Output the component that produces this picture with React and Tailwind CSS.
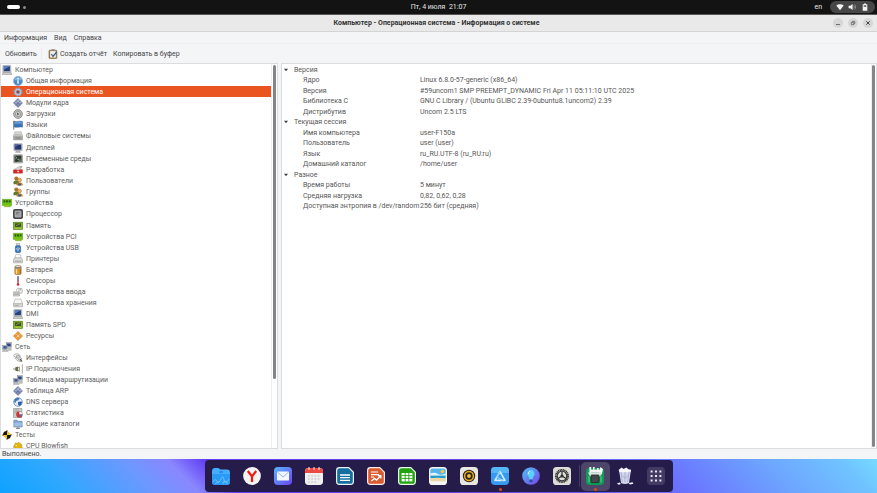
import React from "react";

const ICONS = {
  computer: (
    <>
      <path d="M1 9h10l1 2.6H.2z" fill="#c9cac6" stroke="#777" strokeWidth=".4" />
      <rect x="1" y=".6" width="9.6" height="8" rx=".6" fill="#c8cbd0" stroke="#74777c" strokeWidth=".5" />
      <rect x="2.1" y="1.6" width="7.4" height="5.8" fill="#24407c" />
      <path d="M2.1 1.6h7.4L2.1 5.6z" fill="#5a7fc0" />
    </>
  ),
  info: (
    <>
      <circle cx="6" cy="6" r="5.6" fill="#4a8bcb" stroke="#9fb9d3" strokeWidth=".7" />
      <path d="M1.4 5a4.7 4.7 0 0 1 9.2 0z" fill="#82b4e2" />
      <circle cx="6" cy="3.3" r="1" fill="#fff" />
      <path d="M5.2 5h1.6v4.4H5.2z" fill="#fff" />
    </>
  ),
  gear: (
    <>
      <circle cx="6" cy="6" r="4.7" fill="none" stroke="#7d9cc6" strokeWidth="1.8" strokeDasharray="1.9 1.79" />
      <circle cx="6" cy="6" r="3.2" fill="none" stroke="#a9c3e6" strokeWidth="2" />
      <circle cx="6" cy="6" r="1.6" fill="#5d5876" />
    </>
  ),
  module: (
    <>
      <path d="M6 .6 11.4 6 6 11.4.6 6z" fill="#7f8bb5" stroke="#525d86" strokeWidth=".6" />
      <path d="M6 1.2 10.8 6H1.2z" fill="#a5afd0" />
      <path d="M3.4 3.3 8.7 8.6M6 1 1 6M8.6 3.4 3.4 8.6" stroke="#5c678f" strokeWidth=".6" />
    </>
  ),
  boot: (
    <>
      <circle cx="6" cy="6" r="5.3" fill="#bdbdbb" stroke="#6e6e6c" strokeWidth=".8" />
      <circle cx="6" cy="6" r="3" fill="#e6e6e4" stroke="#777" strokeWidth=".8" />
      <path d="M4.9 4.2 8 6 4.9 7.8z" fill="#555" />
    </>
  ),
  flag: (
    <>
      <path d="M.9 1v10.6" stroke="#565d66" strokeWidth="1" />
      <path d="M1.4 1.4c3 1.6 6-.9 10 .3v6.9c-4-1.2-7 1.2-10-.3z" fill="#3b74b7" stroke="#234f87" strokeWidth=".5" />
      <path d="M1.8 2.4c3 1.2 6-.8 9-.2v2c-3-.6-6 1-9 .2z" fill="#6d9fd7" />
    </>
  ),
  disk: (
    <>
      <path d="M2.2 1h7.6l1.7 5.2H.5z" fill="#dcdcda" stroke="#8d8d8b" strokeWidth=".5" />
      <rect x=".5" y="6.2" width="11" height="4.5" rx=".6" fill="#b4b4b2" stroke="#777" strokeWidth=".5" />
      <path d="M2 8.4h8" stroke="#5f5f5d" strokeWidth=".9" />
      <path d="M2.4 4h7.2" stroke="#9c9c9a" strokeWidth=".7" />
    </>
  ),
  display: (
    <>
      <path d="M4.2 9h3.6l1.2 2.5H3z" fill="#b6b8ba" stroke="#777" strokeWidth=".3" />
      <rect x="1" y=".8" width="10" height="8.4" rx=".6" fill="#cfd1d4" stroke="#74777c" strokeWidth=".5" />
      <rect x="2" y="1.8" width="8" height="6.2" fill="#24346c" />
      <path d="M2 1.8h5L2 6z" fill="#505fa0" />
    </>
  ),
  terminal: (
    <>
      <rect x=".8" y=".8" width="10.6" height="10" rx=".6" fill="#c0c2be" stroke="#666" strokeWidth=".5" />
      <rect x="1.8" y="1.8" width="8.5" height="7.7" fill="#2d3a2e" />
      <path d="m2.8 3 1.8 1.5L2.8 6M5.2 6.4h2.6" stroke="#b9c9b4" fill="none" strokeWidth=".8" />
      <path d="M5 9.5 10.3 5v4.5z" fill="#617261" />
    </>
  ),
  knife: (
    <>
      <path d="m1.6 5.4 6-3.8 3 .4-5.4 3.4z" fill="#ddd" stroke="#888" strokeWidth=".5" />
      <path d="m8 3.9 2.6-3 .8.6-2 3z" fill="#999" />
      <path d="M.5 6.2c2-1.4 3.4.5 5.5 0s3.5-1.6 5.4-.4v4H.5z" fill="#df2323" stroke="#9f1414" strokeWidth=".4" />
      <path d="M5 7.9h2.4M6.2 6.8V9" stroke="#fff" strokeWidth=".8" />
    </>
  ),
  users: (
    <>
      <circle cx="4" cy="3.1" r="2.5" fill="#a9752d" />
      <path d="M.6 10V7.6c0-3 6.6-3 6.6 0V10z" fill="#5e7c2f" />
      <circle cx="7.9" cy="4.9" r="2.3" fill="#f2b25a" stroke="#8e5b17" strokeWidth=".5" />
      <path d="M4.2 11.5V10c0-3 7.4-3 7.4 0v1.5z" fill="#c8872d" />
      <path d="M5.8 9h4l-.6 2.5H6.4z" fill="#2f5a99" />
    </>
  ),
  pci: (
    <>
      <path d="M.3 1.5h11.4v7.4H10v1.6H3V8.9H.3z" fill="#6fc313" stroke="#4a8c09" strokeWidth=".5" />
      <path d="M1.8 2.6h2.2v2.8H1.8zM4.9 2.6h2.2v2.8H4.9zM8 2.6h2.2v2.8H8z" fill="#2c5a12" />
      <path d="M3.6 9v1.4M5.2 9v1.4M6.8 9v1.4M8.4 9v1.4" stroke="#e2cf4c" strokeWidth=".7" />
    </>
  ),
  cpu: (
    <>
      <rect x=".6" y=".6" width="10.8" height="10.8" rx="1.4" fill="#4b4c4e" stroke="#27282a" strokeWidth=".9" />
      <rect x="2.4" y="2.4" width="7.2" height="7.2" rx=".6" fill="#9d9fa1" stroke="#c9cacb" strokeWidth=".7" />
      <path d="M3.4 4h4.4M3.4 5.6h3" stroke="#5c5d60" strokeWidth=".7" />
    </>
  ),
  memory: (
    <>
      <rect x=".5" y="1.4" width="11" height="8.8" fill="#7eb52c" stroke="#48740f" strokeWidth=".7" />
      <rect x="2.4" y="2.8" width="7.2" height="4.4" fill="#445125" />
      <path d="M3.4 5.8 8.3 3.4" stroke="#9ab162" strokeWidth=".8" />
      <path d="M2 8.8h8" stroke="#e1d66c" strokeWidth=".9" strokeDasharray="1 .6" />
    </>
  ),
  usb: (
    <>
      <path d="M4 .4h4v3H4z" fill="#d6d8da" stroke="#777" strokeWidth=".5" />
      <rect x="2.8" y="3.2" width="6.4" height="8.4" rx="1.6" fill="#3674b8" stroke="#1e4c83" strokeWidth=".5" />
      <path d="M6 4.6v5.6M4.4 6v1.6L6 8.6l1.6-1.4V5.8" stroke="#e9f1fa" strokeWidth=".7" fill="none" />
    </>
  ),
  printer: (
    <>
      <path d="M3.2.8h5.6l.6 4.4H2.6z" fill="#fff" stroke="#999" strokeWidth=".6" />
      <path d="M1.9 4.6h8.2l1.4 2.6v3.4H.5V7.2z" fill="#dfdfdc" stroke="#888" strokeWidth=".6" />
      <path d="M2 8.6h8" stroke="#777" strokeWidth=".8" />
    </>
  ),
  battery: (
    <>
      <rect x="2.2" y="1" width="7.6" height="10.4" rx="1.4" fill="#e59a2c" stroke="#7d5c2d" strokeWidth=".6" />
      <path d="M2.2 4.4V2.3C2.2.3 9.8.3 9.8 2.3v2.1z" fill="#8b8980" />
      <path d="M3.4 1.8h5" stroke="#e5e3db" strokeWidth="1" />
      <path d="M4.2 5v5.6" stroke="#ffe2a0" strokeWidth="1.4" />
      <path d="M8.8 5v5.6" stroke="#8b5a1c" strokeWidth="1" />
    </>
  ),
  sensor: (
    <>
      <path d="M6 .4v5.2" stroke="#3b3f7a" strokeWidth="1.5" />
      <path d="M6 5v5.6" stroke="#c62a3c" strokeWidth="1.5" />
      <circle cx="6" cy="10.2" r="1.5" fill="#d51f33" />
    </>
  ),
  input: (
    <>
      <path d="M.8 5.8h6.4l.8 5H.4z" fill="#d6d6d3" stroke="#8c8c89" strokeWidth=".6" />
      <path d="M1.4 7.4h5.4M1.2 9h6" stroke="#888" strokeWidth=".6" />
      <rect x="7" y="1.6" width="4.2" height="6" rx="1.8" fill="#ebebe8" stroke="#8c8c89" strokeWidth=".6" />
      <path d="M9 1.6V4M7.4 2C5 .4 4 2.6 4.4 5" stroke="#777" strokeWidth=".6" fill="none" />
    </>
  ),
  storage: (
    <>
      <path d="M2.4 1.2h7.2l1.9 6H.5z" fill="#f5f5f3" stroke="#999" strokeWidth=".6" />
      <rect x=".5" y="7" width="11" height="3.6" rx=".7" fill="#dededc" stroke="#888" strokeWidth=".6" />
      <path d="M2 8.9h5" stroke="#888" strokeWidth=".7" />
    </>
  ),
  resources: (
    <>
      <path d="M6 .6 11.4 6 6 11.4.6 6z" fill="#ef9432" stroke="#bc6c1b" strokeWidth=".6" />
      <path d="m4 3.6 4.2 4.2M8.6 3.6 4 8.2" stroke="#ffdcb0" strokeWidth=".7" />
      <path d="M4.8 6 6 4.8 7.2 6 6 7.2z" fill="#ffe6c2" />
    </>
  ),
  network: (
    <>
      <rect x="5" y=".8" width="6.4" height="5.6" fill="#c9ccd1" stroke="#6d7075" strokeWidth=".5" />
      <rect x="5.9" y="1.7" width="4.6" height="3.6" fill="#2b4684" />
      <rect x="7" y="6.8" width="4.6" height="3.6" fill="#bbbdb9" />
      <rect x=".6" y="4" width="6" height="5.2" fill="#d4d6da" stroke="#6d7075" strokeWidth=".5" />
      <rect x="1.5" y="4.9" width="4.2" height="3.2" fill="#3c5a9b" />
      <path d="M.8 10h6.2l.4 1.5H.2z" fill="#bbbdb9" stroke="#777" strokeWidth=".3" />
    </>
  ),
  plug: (
    <>
      <path d="M.8 3.4C1.4 1 5 .4 7 1.6s2.2 3-.2 3.6S1.6 5.6 1 3.4M3 6c.4 2.6 3.4 4.2 8.2 4.4" stroke="#8b8b88" strokeWidth=".9" fill="none" />
      <path d="m3.6 3.4 3-.8 4 4.4-2.4 2L4 5.6z" fill="#c9c9c6" stroke="#666" strokeWidth=".5" />
      <path d="m8.6 7.6 2 2" stroke="#444" strokeWidth="1.3" />
    </>
  ),
  ip: (
    <>
      <path d="M0 6h3.4M5.8 4.4h2.4M5.8 7.6h2.4" stroke="#77776b" strokeWidth="1" />
      <path d="M2.8 3.8 6 2.9v6.2l-3.2-.9z" fill="#6b6b52" />
      <path d="M7 3h1.4v6H7z" fill="#a9a98f" />
      <path d="M11.2.4v11.2" stroke="#8b8b80" strokeWidth=".9" />
    </>
  ),
  dns: (
    <>
      <circle cx="6" cy="6" r="5.2" fill="#dfeaf6" stroke="#4a79b3" strokeWidth=".8" />
      <path d="M2 3c2-2.4 5-2.4 6-1.3L6.4 4 3.8 4.8 3 7.2 1.2 6z" fill="#4379b8" />
      <path d="m6 6 3.8-.6 1.2 1-1.8 3.5-2 .8L6 8.6z" fill="#2d609f" />
    </>
  ),
  stats: (
    <>
      <path d="M.6.6h10v10.8h-10z" fill="#c9cbcd" stroke="#747678" strokeWidth=".6" />
      <path d="M2 2.4h5M2 4h3.4M2 5.6h2" stroke="#8a8c8e" strokeWidth=".7" />
      <circle cx="7.6" cy="7.7" r="3.6" fill="#d8342f" stroke="#8f2622" strokeWidth=".4" />
      <path d="M7.6 7.7V4.1a3.6 3.6 0 0 1 3.6 3.6z" fill="#eef1f5" />
      <path d="M7.6 7.7h3.6a3.6 3.6 0 0 1-2 3.1z" fill="#4171b4" />
    </>
  ),
  folder: (
    <>
      <path d="M1 1.4h4l1 1.4h5v6.8H1z" fill="#7ca4d2" stroke="#496e9e" strokeWidth=".6" />
      <path d="M1.6 4.2h8.8v4.8H1.6z" fill="#9dbfe4" />
      <path d="M3.6 11.2h4.8M6 9.6v1.6" stroke="#6f7275" strokeWidth="1.1" />
    </>
  ),
  tests: (
    <>
      <path d="M6 .6 11.4 6 6 11.4.6 6z" fill="#f2c91c" />
      <path d="M6 6V1.2A4.8 4.8 0 0 0 1.2 6zM6 6h4.8A4.8 4.8 0 0 1 6 10.8z" fill="#161616" />
      <path d="M6 0v2M6 10v2M0 6h2M10 6h2" stroke="#222" strokeWidth=".8" />
    </>
  ),
  blowfish: (
    <>
      <path d="M.6 7 2 4.2l1-2 2 .6L7 1.4l1.6 1.7 2 1.1-.2 1.8 1.2 3-2 2.2H2z" fill="#e7b40f" stroke="#a07a06" strokeWidth=".5" />
      <circle cx="4" cy="5.4" r=".9" fill="#fff3b8" />
      <path d="M2.6 8.2c2 1.4 4.6 1.2 6.6 0" stroke="#9f7907" strokeWidth=".7" fill="none" />
    </>
  ),
};

const TREE = [
  ["computer", "Компьютер", 0],
  ["info", "Общая информация", 1],
  ["gear", "Операционная система", 1],
  ["module", "Модули ядра", 1],
  ["boot", "Загрузки", 1],
  ["flag", "Языки", 1],
  ["disk", "Файловые системы", 1, true],
  ["display", "Дисплей", 1],
  ["terminal", "Переменные среды", 1],
  ["knife", "Разработка", 1],
  ["users", "Пользователи", 1],
  ["users", "Группы", 1],
  ["pci", "Устройства", 0],
  ["cpu", "Процессор", 1, true],
  ["memory", "Память", 1],
  ["pci", "Устройства PCI", 1],
  ["usb", "Устройства USB", 1],
  ["printer", "Принтеры", 1],
  ["battery", "Батарея", 1],
  ["sensor", "Сенсоры", 1],
  ["input", "Устройства ввода", 1],
  ["storage", "Устройства хранения", 1],
  ["computer", "DMI", 1],
  ["memory", "Память SPD", 1],
  ["resources", "Ресурсы", 1],
  ["network", "Сеть", 0],
  ["plug", "Интерфейсы", 1],
  ["ip", "IP Подключения", 1],
  ["network", "Таблица маршрутизации", 1],
  ["module", "Таблица ARP", 1],
  ["dns", "DNS сервера", 1],
  ["stats", "Статистика", 1],
  ["folder", "Общие каталоги", 1],
  ["tests", "Тесты", 0],
  ["blowfish", "CPU Blowfish", 1],
];

const DETAILS = [
  ["Версия"],
  ["Ядро", "Linux 6.8.0-57-generic (x86_64)"],
  ["Версия", "#59uncom1 SMP PREEMPT_DYNAMIC Fri Apr 11 05:11:10 UTC 2025"],
  ["Библиотека C", "GNU C Library / (Ubuntu GLIBC 2.39-0ubuntu8.1uncom2) 2.39"],
  ["Дистрибутив", "Uncom 2.5 LTS"],
  ["Текущая сессия"],
  ["Имя компьютера", "user-F150a"],
  ["Пользователь", "user (user)"],
  ["Язык", "ru_RU.UTF-8 (ru_RU:ru)"],
  ["Домашний каталог", "/home/user"],
  ["Разное"],
  ["Время работы", "5 минут"],
  ["Средняя нагрузка", "0,82, 0,62, 0,28"],
  ["Доступная энтропия в /dev/random", "256 бит (средняя)"],
];

function TopBar() {
  return (
    <header className="grid h-[15px] shrink-0 grid-cols-3 items-center border-b border-[#5b5757] bg-[#131313] px-[2px] text-[#e6e6e6]">
      <button aria-label="Обзор" className="flex items-center gap-[3px] pl-[5px]">
        <span className="h-1 w-[13px] rounded-full bg-white" />
        <span className="size-[3px] rounded-full bg-[#8b8b8b]" />
      </button>
      <button className="justify-self-center whitespace-pre">Пт, 4 июля  21:07</button>
      <div className="flex items-center gap-2 justify-self-end">
        <button>en</button>
        <button aria-label="Системное меню" className="flex h-3 w-[45px] items-center justify-around rounded-full bg-[#474747] px-1">
          <svg viewBox="0 0 8 8" className="size-2">
            <path d="M.3 2.6a5.4 5.4 0 0 1 7.4 0L4 7.2z" fill="#f4f4f4" />
          </svg>
          <svg viewBox="0 0 8 8" className="size-2">
            <path d="M.6 2.8h1.7L4.6.9v6.2L2.3 5.2H.6z" fill="#f4f4f4" />
            <path d="M5.6 2.4c.8.9.8 2.3 0 3.2M6.6 1.5c1.2 1.5 1.2 3.5 0 5" fill="none" stroke="#a5a5a5" strokeWidth=".7" />
          </svg>
          <svg viewBox="0 0 8 8" className="size-2">
            <path d="M3 .4h2v.9h1.3v6.4H1.7V1.3H3z" fill="#f4f4f4" />
            <path d="M2.7 2.3h2.6v1.5H2.7z" fill="#555" />
          </svg>
        </button>
      </div>
    </header>
  );
}

function TitleBar() {
  const button = "flex size-[10px] items-center justify-center rounded-full bg-[#d6d6d6]";
  return (
    <div className="grid h-[17px] shrink-0 grid-cols-[1fr_auto_1fr] items-center border-b border-[#d4d4d5] bg-[#e9e9e9] pr-1">
      <h1 className="col-start-2 font-bold text-[#333]">Компьютер - Операционная система - Информация о системе</h1>
      <div className="flex gap-[5px] justify-self-end">
        <button aria-label="Свернуть" className={button}>
          <svg viewBox="0 0 10 10" className="size-[10px]"><path d="M3 6.5h4" stroke="#555" strokeWidth=".8" /></svg>
        </button>
        <button aria-label="Восстановить" className={button}>
          <svg viewBox="0 0 10 10" className="size-[10px]">
            <path d="M3.3 4.5h2.4v2.2H3.3zM4.4 4V3.3h2.4v2.4h-.6" fill="none" stroke="#555" strokeWidth=".7" />
          </svg>
        </button>
        <button aria-label="Закрыть" className={button}>
          <svg viewBox="0 0 10 10" className="size-[10px]"><path d="m3.3 3.3 3.4 3.4m0-3.4L3.3 6.7" stroke="#333" strokeWidth=".9" /></svg>
        </button>
      </div>
    </div>
  );
}

function Toolbar() {
  return (
    <div className="flex h-5 shrink-0 items-center border-t border-[#eeeff0] pl-[5px] text-[#454545]">
      <button>Обновить</button>
      <span className="ml-1 mr-[6px] h-3 w-px bg-[#ebecee]" />
      <button className="flex items-center gap-[2px]">
        <svg viewBox="0 0 12 12" className="size-[10px]">
          <rect x="1.2" y="1.4" width="9.4" height="10" rx=".9" fill="#b28b4c" stroke="#6f552b" strokeWidth=".7" />
          <path d="M2.6 2.6h6.8v7.6H2.6z" fill="#f2f3f3" />
          <rect x="4" y=".4" width="4" height="2" rx=".7" fill="#85878a" />
          <path d="m4 6 2 3 4.4-5.4" stroke="#3b5f94" strokeWidth="1.6" fill="none" />
        </svg>
        Создать отчёт
      </button>
      <button className="ml-[6px]">Копировать в буфер</button>
    </div>
  );
}

function Tree() {
  return (
    <nav className="flex w-[278px] shrink-0 overflow-hidden border border-[#dadce0] bg-white">
      <ul className="min-w-0 flex-1 leading-[8px] text-[#606060]">
        {TREE.map(([icon, label, depth, tall], i) => (
          <li key={i}>
            <button
              className={[
                "flex w-full items-center gap-[3px]",
                tall ? "h-3" : "h-[11px]",
                depth ? "pl-3" : "pl-px",
                i === 2 ? "bg-[#e95420] text-white" : "",
              ].join(" ")}
            >
              <svg viewBox="0 0 12 12" className="size-[10px] shrink-0">{ICONS[icon]}</svg>
              {label}
            </button>
          </li>
        ))}
      </ul>
      <div className="flex w-[6px] shrink-0 justify-center border-l border-[#f0f0f0] pt-px">
        <div className="h-[82%] w-[3px] rounded-full bg-[#858585]" />
      </div>
    </nav>
  );
}

function Details() {
  return (
    <main className="flex min-w-0 flex-1 border border-[#dadce0] bg-white">
      <div className="min-w-0 flex-1">
        <table className="w-full table-fixed border-collapse text-left text-[#565656]">
          <colgroup>
            <col className="w-[138px]" />
            <col />
          </colgroup>
          <tbody>
            {DETAILS.map(([name, value], i) => (
              <tr key={i} className="h-[11px] even:h-[10px]">
                {value ? (
                  <>
                    <th scope="row" className="whitespace-nowrap p-0 pl-[21px] font-normal">{name}</th>
                    <td className="whitespace-nowrap p-0">{value}</td>
                  </>
                ) : (
                  <th colSpan={2} className="p-0 pl-[2px] font-normal">
                    <button className="flex items-center gap-[6px]">
                      <svg viewBox="0 0 4 4" className="size-1"><path d="M0 .8h4L2 3.2z" fill="#3c3c3c" /></svg>
                      {name}
                    </button>
                  </th>
                )}
              </tr>
            ))}
          </tbody>
        </table>
      </div>
      <div className="w-[5px] shrink-0 border-l border-[#f0f0f0] py-px">
        <div className="h-full w-[3px] rounded-full bg-[#858585]" />
      </div>
    </main>
  );
}

const APPS = [
  ["Файлы", (
    <>
      <path d="M0 4.4Q0 1 3 1h3.4l2 1.6H15q3 0 3 3v9.2q0 3.2-3.2 3.2H3.2Q0 18 0 14.8z" fill="#45adff" />
      <path d="M0 7h18v7.8q0 3.2-3.2 3.2H3.2Q0 18 0 14.8z" fill="#2b9af6" />
      <path d="M1 15q2-4 4-1t4-2 3 1 5-1M3 17q2-3 4-1M11 17v-2q2-2 4 0v2" fill="none" stroke="#71c7ff" strokeWidth=".8" />
      <path d="M7.4 5h3.6" stroke="#1263c3" strokeWidth=".9" />
    </>
  )],
  ["Яндекс Браузер", (
    <>
      <circle cx="9" cy="9" r="8.9" fill="#f3f3f3" />
      <path d="m4.8 4 4.2 5.4L13.2 4M9 9v6" fill="none" stroke="#f5150b" strokeWidth="2.2" />
    </>
  )],
  ["Почта", (
    <>
      <rect width="18" height="18" rx="4" fill="url(#mail)" />
      <rect x="3" y="4.4" width="12" height="9.2" rx="1.2" fill="#f4f7ff" />
      <path d="m3.4 5 5.6 5 5.6-5" fill="none" stroke="#9db5ef" strokeWidth="1" />
    </>
  )],
  ["Календарь", (
    <>
      <rect y="1" width="18" height="17" rx="3.4" fill="#efefef" />
      <path d="M0 6V4.4Q0 1 3.4 1h11.2Q18 1 18 4.4V6z" fill="#ef4a42" />
      <path d="M4 0v2.8M9 0v2.8M14 0v2.8" stroke="#fff" strokeWidth="1" />
      <path d="M3 9h12M3 12h12M3 15h9" stroke="#cfcfcf" strokeWidth="1.6" strokeDasharray="1.8 1.4" />
    </>
  )],
  ["Writer", (
    <>
      <path d="M3.4 0H13l5 5v9.6q0 3.4-3.4 3.4H3.4Q0 18 0 14.6V3.4Q0 0 3.4 0z" fill="#e9f3f8" />
      <path d="M3.6 1.2h9l4.2 4.2v8.8q0 2.6-2.6 2.6H3.8q-2.6 0-2.6-2.6V3.8q0-2.6 2.4-2.6z" fill="#176f9f" />
      <path d="M4 8h10M4 10.7h10M4 13.4h10" stroke="#fff" strokeWidth="1.3" />
    </>
  )],
  ["Impress", (
    <>
      <path d="M3.4 0H13l5 5v9.6q0 3.4-3.4 3.4H3.4Q0 18 0 14.6V3.4Q0 0 3.4 0z" fill="#fbeee8" />
      <path d="M3.6 1.2h9l4.2 4.2v8.8q0 2.6-2.6 2.6H3.8q-2.6 0-2.6-2.6V3.8q0-2.6 2.4-2.6z" fill="#da5a31" />
      <path d="M4 5h7M4 7.6h8M4 10h3" stroke="#fff" strokeWidth="1.2" />
      <path d="m4.4 14 3.2-2.6 2 1.6 4-4.2M10.8 8.6h3v3" stroke="#fff" strokeWidth="1.3" fill="none" />
    </>
  )],
  ["Calc", (
    <>
      <path d="M3.4 0H13l5 5v9.6q0 3.4-3.4 3.4H3.4Q0 18 0 14.6V3.4Q0 0 3.4 0z" fill="#eafbe6" />
      <path d="M3.6 1.2h9l4.2 4.2v8.8q0 2.6-2.6 2.6H3.8q-2.6 0-2.6-2.6V3.8q0-2.6 2.4-2.6z" fill="#22a20f" />
      <path d="M3.6 6h10.8v8.4H3.6z" fill="#fff" />
      <path d="M3.6 8.6h10.8M3.6 11.4h10.8M7.2 6v8.4M10.8 6v8.4" stroke="#22a20f" strokeWidth=".9" />
    </>
  )],
  ["Просмотр изображений", (
    <>
      <rect width="18" height="18" rx="3.6" fill="#f5f5f2" />
      <path d="M1.4 3.2q0-1.8 1.8-1.8h11.6q1.8 0 1.8 1.8V9H1.4z" fill="#58b5ec" />
      <path d="M1.4 6.6q4-1.8 7 .2t8.2-.4V10H1.4z" fill="#e4f4fc" />
      <path d="M1.4 8.6h15.2v2.8H1.4z" fill="#259bc9" />
      <path d="M1.4 11.6q6-1.8 15.2 0v2.6H1.4z" fill="#ecd6a5" />
      <circle cx="13.4" cy="4.4" r="1.7" fill="#ffc633" />
    </>
  )],
  ["Музыка", (
    <>
      <rect width="18" height="18" rx="3.6" fill="#e9e7df" />
      <circle cx="9" cy="9" r="6.2" fill="#262626" />
      <circle cx="9" cy="9" r="4.4" fill="none" stroke="#eda91c" strokeWidth="1.5" />
      <circle cx="9" cy="9" r="1.9" fill="#f5bd31" />
    </>
  )],
  ["Центр приложений", (
    <>
      <rect width="18" height="18" rx="3.8" fill="#359af0" />
      <path d="M0 6V3.8Q0 0 3.8 0h10.4Q18 0 18 3.8V6z" fill="#56b7f8" />
      <path d="m4 13.4 5-8.8 5 8.8z" fill="none" stroke="#d7edff" strokeWidth="1.6" strokeLinejoin="round" />
      <path d="M9 4.6 6 10l6 3.4" fill="none" stroke="#8fcbff" strokeWidth="1.2" />
    </>
  ), true],
  ["Советы", (
    <>
      <circle cx="9" cy="9" r="8.8" fill="url(#tips)" />
      <path d="M9 3a4 4 0 0 1 2 7.2l-.4 2H7.4l-.4-2A4 4 0 0 1 9 3z" fill="#5ad0fa" />
      <path d="M8 4.2q-1.8.8-1.8 3" stroke="#dff8ff" fill="none" strokeWidth="1" />
      <path d="M7.4 12.8h3.2v2.4H7.4z" fill="#2d4f9f" />
    </>
  )],
  ["Настройки", (
    <>
      <rect width="18" height="18" rx="3.6" fill="#deded9" />
      <circle cx="9" cy="9" r="6.1" fill="none" stroke="#303030" strokeWidth="1.9" strokeDasharray="1.1 .5" />
      <circle cx="9" cy="9" r="4.8" fill="none" stroke="#303030" strokeWidth="1.1" />
      <circle cx="9" cy="9" r="1.6" fill="#303030" />
      <path d="M9 9V4.4M9 9l4 2.4M9 9l-4 2.4" stroke="#303030" strokeWidth="1.2" />
    </>
  )],
];

function DockItem({ name, art, running, active }) {
  return (
    <button
      aria-label={name}
      className={[
        "relative flex h-[29px] items-center justify-center rounded-[5px]",
        active ? "w-[29px] bg-[#4e4669]" : "w-[31px]",
      ].join(" ")}
    >
      <svg viewBox="0 0 18 18" className="size-[18px]">{art}</svg>
      {running && <span className="absolute bottom-0 size-[3px] rounded-full bg-[#e2481c]" />}
    </button>
  );
}

function Dock() {
  return (
    <footer className="flex h-[34px] shrink-0 items-start justify-center bg-[linear-gradient(45deg,#0ea2ff_0%,#30a8ff_8%,#6c98ff_17%,#8a87ff_22%,#6340f5_26%,#6a3fe8_50%,#6a70ff_75%,#6da4ff_87%,#70c4ff_96%,#76daff_100%)] pt-px">
      <svg className="absolute size-0" aria-hidden="true">
        <defs>
          <linearGradient id="mail" x1="0" y1="0" x2="1" y2="1">
            <stop offset="0" stopColor="#58b6ff" />
            <stop offset="1" stopColor="#6a45ee" />
          </linearGradient>
          <linearGradient id="tips" x1="0" y1="0" x2="1" y2="1">
            <stop offset="0" stopColor="#4fc4f7" />
            <stop offset="1" stopColor="#7b3ee8" />
          </linearGradient>
        </defs>
      </svg>
      <div className="flex h-8 items-center rounded bg-[#251c4a] px-px">
        {APPS.map(([name, art, running]) => (
          <DockItem key={name} name={name} art={art} running={running} />
        ))}
        <span className="mx-px h-[22px] w-px bg-[#433a63]" />
        <DockItem
          name="Информация о системе"
          running
          active
          art={
            <>
              <rect y="1" width="18" height="17" rx="3.4" fill="#0e9a57" />
              <path d="M4 2.6h10v3H4z" fill="#f0f1f0" />
              <path d="M3.4 0v6.4h1.8V0zM7 0v5h1.6V0zM11 1v4h1.6V1zM14.4 0 13 7l2.8.6L17 2z" fill="#fafafa" />
              <path d="M2 5.4h13.6l-1.4 4.2H4z" fill="#dfe3df" />
              <rect x="5" y="8" width="8" height="7.6" rx=".8" fill="#43484a" stroke="#202627" strokeWidth=".8" />
              <path d="M3 9.4v6M15 9.4v6" stroke="#65d197" strokeWidth="1" />
            </>
          }
        />
        <DockItem
          name="Корзина"
          art={
            <>
              <path d="M3 3h12l-2 13q-4 1.8-8 0z" fill="#d3d7ec" />
              <path d="m2.6 3 3-2.4 2 1.4L10.4.4l2 1.8 2.8.6-1 2.4H3.6z" fill="#f6f7fc" />
              <path d="m5 5 1.2 10M9 5v10.4M13 5l-1.4 10M5 8l4 3 4-3" stroke="#9ca4cb" strokeWidth=".7" fill="none" />
              <path d="m.8 16.6 3-1 1 1.4-2 .8zM12.6 16l4-.8.8 1.6-3.4.8z" fill="#eef0fa" />
            </>
          }
        />
        <DockItem
          name="Показать приложения"
          art={
            <>
              <rect width="18" height="18" rx="4" fill="#443b65" />
              <path d="M3.6 4.4h11M3.6 9h11M3.6 13.6h11" stroke="#e9e7f1" strokeWidth="2" strokeDasharray="2 2.4" />
            </>
          }
        />
      </div>
    </footer>
  );
}

export default function App() {
  return (
    <div className="flex h-screen flex-col overflow-hidden bg-[#f4f5f7] font-[Roboto,'Noto_Sans',sans-serif] text-[7px] leading-[10px]">
      <TopBar />
      <TitleBar />
      <div className="flex h-[11px] shrink-0 items-center gap-[7px] pl-1 text-[#454545]">
        <button>Информация</button>
        <button>Вид</button>
        <button>Справка</button>
      </div>
      <Toolbar />
      <div className="flex min-h-0 flex-1 gap-[3px]">
        <Tree />
        <Details />
      </div>
      <div role="status" className="flex h-[10px] shrink-0 items-center pl-[2px] text-[#454545]">Выполнено.</div>
      <Dock />
    </div>
  );
}
